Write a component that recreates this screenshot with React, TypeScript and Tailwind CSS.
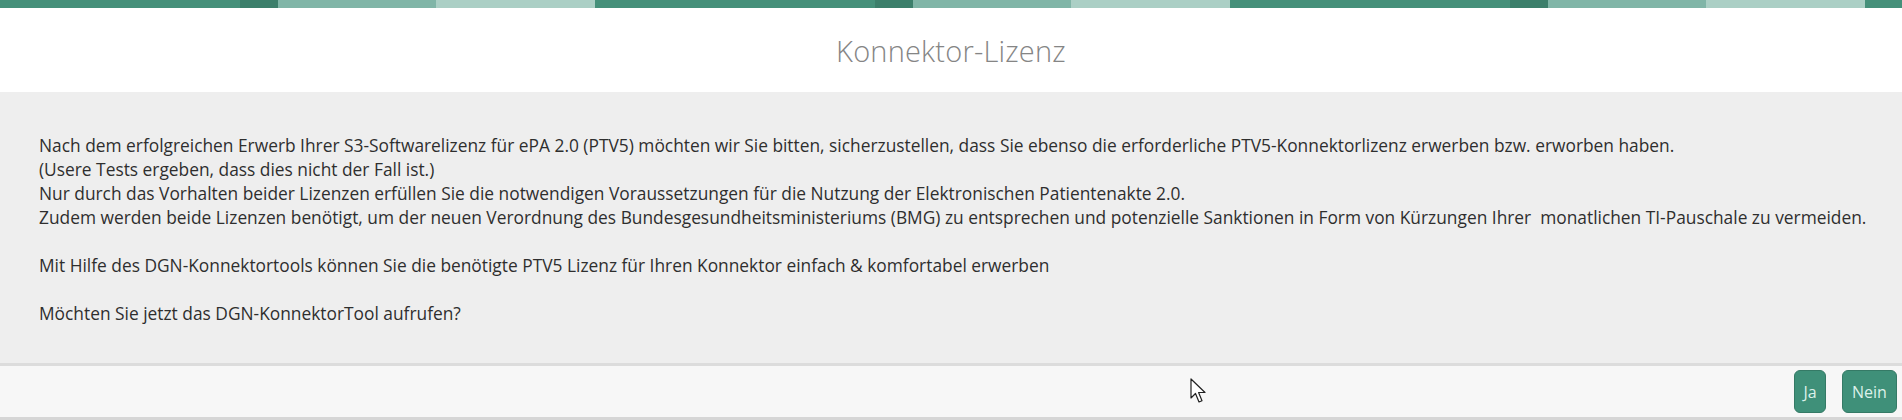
import React from "react";

const lines = [
  "Nach dem erfolgreichen Erwerb Ihrer S3-Softwarelizenz für ePA 2.0 (PTV5) möchten wir Sie bitten, sicherzustellen, dass Sie ebenso die erforderliche PTV5-Konnektorlizenz erwerben bzw. erworben haben.",
  "(Usere Tests ergeben, dass dies nicht der Fall ist.)",
  "Nur durch das Vorhalten beider Lizenzen erfüllen Sie die notwendigen Voraussetzungen für die Nutzung der Elektronischen Patientenakte 2.0.",
  "Zudem werden beide Lizenzen benötigt, um der neuen Verordnung des Bundesgesundheitsministeriums (BMG) zu entsprechen und potenzielle Sanktionen in Form von Kürzungen Ihrer\u00a0 monatlichen TI-Pauschale zu vermeiden.",
  "",
  "Mit Hilfe des DGN-Konnektortools können Sie die benötigte PTV5 Lizenz für Ihren Konnektor einfach & komfortabel erwerben",
  "",
  "Möchten Sie jetzt das DGN-KonnektorTool aufrufen?",
];

const StripeGroup = () => (
  <>
    <div className="w-[158px] shrink-0 bg-[#80b5a7]" />
    <div className="w-[159px] shrink-0 bg-[#abcfc5]" />
    <div className="w-[280px] shrink-0 bg-[#45907a]" />
    <div className="w-[38px] shrink-0 bg-[#3c7f6b]" />
  </>
);

const Cursor = () => (
  <svg
    className="absolute left-[1190px] top-[378px]"
    width="18"
    height="26"
    viewBox="0 0 18 26"
  >
    <path
      d="M1 1 L1 20 L5.5 15.5 L9 24 L12 22.8 L8.6 14.5 L15 14.5 Z"
      fill="#ffffff"
      stroke="#222"
      strokeWidth="1.2"
      strokeLinejoin="round"
    />
  </svg>
);

export default function App() {
  return (
    <div className="relative w-[1902px] h-[420px] overflow-hidden bg-white font-['Open_Sans',sans-serif]">
      <div className="flex h-[8px] overflow-hidden">
        <div className="w-[240px] shrink-0 bg-[#45907a]" />
        <div className="w-[38px] shrink-0 bg-[#3c7f6b]" />
        <StripeGroup />
        <StripeGroup />
        <StripeGroup />
      </div>
      <div className="h-[84px] flex items-center justify-center bg-white">
        <div className="text-[29px] font-light text-[#858585] tracking-[0.2px] leading-none">
          Konnektor-Lizenz
        </div>
      </div>
      <div className="h-[271px] bg-[#eeeeee] pt-[41px] px-[39px] text-[#2e2e2e] text-[17.35px] leading-[24px]">
        {lines.map((l, i) => (
          <div key={i} className="h-[24px] whitespace-pre">
            {l}
          </div>
        ))}
      </div>
      <div className="h-[3px] bg-[#dcdcdc]" />
      <div className="h-[51px] bg-[#f7f7f7] flex items-center justify-end gap-[16px] pr-[5px]">
        <button className="w-[32px] h-[43px] rounded-[6px] bg-[#3f9079] border border-[#357a66] text-[#dcf1ea] text-[16px] leading-none">
          Ja
        </button>
        <button className="w-[55px] h-[43px] rounded-[6px] bg-[#3f9079] border border-[#357a66] text-[#dcf1ea] text-[16px] leading-none">
          Nein
        </button>
      </div>
      <div className="h-[3px] bg-[#d6d6d6]" />
      <Cursor />
    </div>
  );
}
